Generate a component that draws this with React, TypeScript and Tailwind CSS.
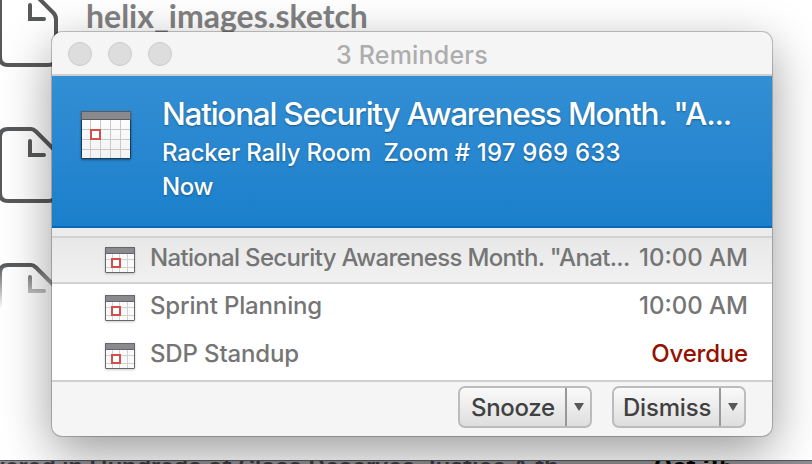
function FileIcon({ className = "", fade = false }: { className?: string; fade?: boolean }) {
  const stroke = fade ? "url(#file-fade)" : "#58595b";
  return (
    <svg className={className} width="70" height="80" viewBox="0 0 70 80" fill="none">
      <defs>
        <linearGradient id="file-fade" gradientUnits="userSpaceOnUse" x1="0" y1="2" x2="0" y2="46">
          <stop offset="0" stopColor="#58595b" />
          <stop offset="1" stopColor="#58595b" stopOpacity="0" />
        </linearGradient>
      </defs>
      <path d="M8 2H31C33 2 34.500 3 36 4.500L53 21.500C55 23.500 56 25 56 28V66Q56 74 48 74H8Q0 74 0 66V10Q0 2 8 2Z" stroke={stroke} strokeWidth="4" />
      <path d="M30 14V28H44" stroke={stroke} strokeWidth="4" strokeLinecap="round" />
    </svg>
  );
}

function LargeCalendar() {
  return (
    <svg className="block shrink-0 drop-shadow-[0_1px_1px_rgba(0,0,0,0.4)]" width="50" height="48" viewBox="0 0 50 48">
      <defs>
        <linearGradient id="cal-large" x1="0" y1="0" x2="0" y2="1">
          <stop offset="0" stopColor="#fff" />
          <stop offset="1" stopColor="#f2f2f2" />
        </linearGradient>
      </defs>
      <rect x="0.500" y="0.500" width="49" height="47" rx="0.500" fill="url(#cal-large)" stroke="#183c5c" />
      <rect x="0.500" y="0.500" width="49" height="8" fill="#8a898e" stroke="#5c5b60" />
      <path d="M9.500 9V47M19.500 9V47M29.500 9V47M39.500 9V47M1 18.500H49M1 28.500H49M1 38.500H49" stroke="#c8c8c8" />
      <rect x="10" y="19" width="9" height="9" fill="#fff" stroke="#d05050" strokeWidth="2" />
    </svg>
  );
}

function SmallCalendar() {
  return (
    <svg className="block shrink-0 drop-shadow-[0_1px_1px_rgba(0,0,0,0.2)]" width="30" height="26" viewBox="0 0 30 26">
      <rect x="0.500" y="0.500" width="29" height="25" rx="0.500" fill="#fafafa" stroke="#67666a" />
      <rect x="0.500" y="0.500" width="29" height="6" fill="#8a898e" stroke="#67666a" />
      <path d="M7.500 7V25M14.500 7V25M22.500 7V25M1 12.500H29M1 20.500H29" stroke="#d2d2d2" />
      <rect x="7" y="12" width="8" height="8" fill="#fff" stroke="#d05050" strokeWidth="2" />
    </svg>
  );
}

function Row({ title, titleClass, time, timeClass, className }: { title: string; titleClass: string; time: string; timeClass: string; className: string }) {
  return (
    <div className={`flex items-center pr-[24px] pl-[53px] text-[24px] leading-[30px] font-[450] whitespace-pre ${className}`}>
      <SmallCalendar />
      <span className={`ml-[15px] -mt-[4px] ${titleClass}`}>{title}</span>
      <span className={`ml-auto -mt-[4px] ${timeClass}`}>{time}</span>
    </div>
  );
}

function SplitButton({ label, labelClass, className }: { label: string; labelClass: string; className: string }) {
  return (
    <div className={`flex h-[42px] overflow-hidden rounded-[7px] border-2 border-[#bcbcbc] bg-linear-to-b from-[#fafafa] to-[#dedede] ${className}`}>
      <div className={`flex-1 pt-[5px] text-[24px] leading-[30px] font-[450] whitespace-nowrap text-[#404040] ${labelClass}`}>{label}</div>
      <div className="flex w-[25px] items-center justify-center border-l-2 border-[#989898]">
        <svg width="10" height="8" viewBox="0 0 10 8">
          <path d="M0 0H10L5 8Z" fill="#585858" />
        </svg>
      </div>
    </div>
  );
}

export default function App() {
  return (
    <div className="relative h-[464px] w-[812px] overflow-hidden bg-white font-[Inter,'Liberation_Sans',sans-serif]">
      <FileIcon className="absolute -top-[9px] left-0 overflow-visible" />
      <FileIcon className="absolute top-[127px] left-0 overflow-visible" />
      <FileIcon className="absolute top-[263px] left-0 overflow-visible" fade />
      <div className="absolute -top-[3px] left-[86px] font-[Lato,sans-serif] text-[32px] leading-[38px] font-bold whitespace-nowrap text-[#828282]">
        helix_images.sketch
      </div>
      <div className="absolute top-[460px] left-0 h-[4px] w-full overflow-hidden border-t border-[#58585a] bg-[#8d8d90] font-[Roboto,sans-serif] text-[26px] leading-[28px] font-medium whitespace-nowrap text-[#3a3a3e]">
        <span className="absolute -top-[8px] -left-[8px] tracking-[-0.1px]">vered in Hundreds of Class Deserves Justice A th</span>
        <span className="absolute -top-[8px] left-[654px] font-bold tracking-[0.6px] text-black">Oct 25</span>
      </div>

      <main className="absolute top-[32px] left-[52px] flex h-[404px] w-[720px] flex-col overflow-hidden rounded-[10px] bg-[#f5f5f5] shadow-[0_0_0_1px_rgba(0,0,0,0.22),0_16px_50px_rgba(0,0,0,0.4)]">
        <header className="relative flex h-[44px] shrink-0 items-center border-b-2 border-[#cfcfcf] pl-[16px]">
          <div className="flex gap-4 pt-[2px]">
            <i className="size-6 rounded-full border border-[#cbcbcb] bg-[#dddddd]" />
            <i className="size-6 rounded-full border border-[#cbcbcb] bg-[#dddddd]" />
            <i className="size-6 rounded-full border border-[#cbcbcb] bg-[#dddddd]" />
          </div>
          <h1 className="ml-[164px] pt-[3px] text-[25px] leading-[30px] font-[450] tracking-[0.2px] whitespace-nowrap text-[#adadad]">3 Reminders</h1>
        </header>

        <section className="flex h-[152px] shrink-0 border-b-2 border-[#0768b8] bg-linear-to-b from-[#338fd4] to-[#1a7fcb] pt-[18px] pl-[29px] text-white">
          <div className="pt-[17px]">
            <LargeCalendar />
          </div>
          <div className="ml-[31px] whitespace-pre [text-shadow:0_1px_2px_rgba(0,0,0,0.35)]">
            <h2 className="mb-[2px] text-[31.5px] leading-[40px] font-[450] tracking-[-1.25px]">National Security Awareness Month. "A...</h2>
            <p className="text-[24px] leading-[34px] font-medium">
              <span className="tracking-[-0.2px]">Racker Rally Room  Zoom </span>
              <span className="tracking-[0.2px]"># 197 969 633</span>
            </p>
            <p className="text-[24px] leading-[34px] font-medium tracking-[-0.4px]">Now</p>
          </div>
        </section>

        <section className="flex h-[154px] shrink-0 flex-col border-b-2 border-[#cfcfcf] bg-white text-[#757575]">
          <div className="h-[8px] bg-[#ececec]" />
          <Row className="h-[48px] border-y-2 border-[#d2d2d2] bg-linear-to-b from-[#e8e8e8] to-[#f1f1f1]" title={'National Security Awareness Month. "Anat...'} titleClass="tracking-[-0.66px]" time="10:00 AM" timeClass="tracking-[0px]" />
          <Row className="h-[48px]" title="Sprint Planning" titleClass="tracking-[-0.15px]" time="10:00 AM" timeClass="tracking-[0px]" />
          <Row className="h-[48px]" title="SDP Standup" titleClass="tracking-[-0.15px]" time="Overdue" timeClass="tracking-[-0.2px] text-[#941100]" />
        </section>

        <footer className="flex flex-1 gap-[20px] pt-[4px] pl-[406px]">
          <SplitButton className="w-[134px]" label="Snooze" labelClass="pl-[11px] tracking-[-0.3px]" />
          <SplitButton className="w-[134px]" label="Dismiss" labelClass="pl-[9px] tracking-[-0.2px]" />
        </footer>
      </main>
    </div>
  );
}
